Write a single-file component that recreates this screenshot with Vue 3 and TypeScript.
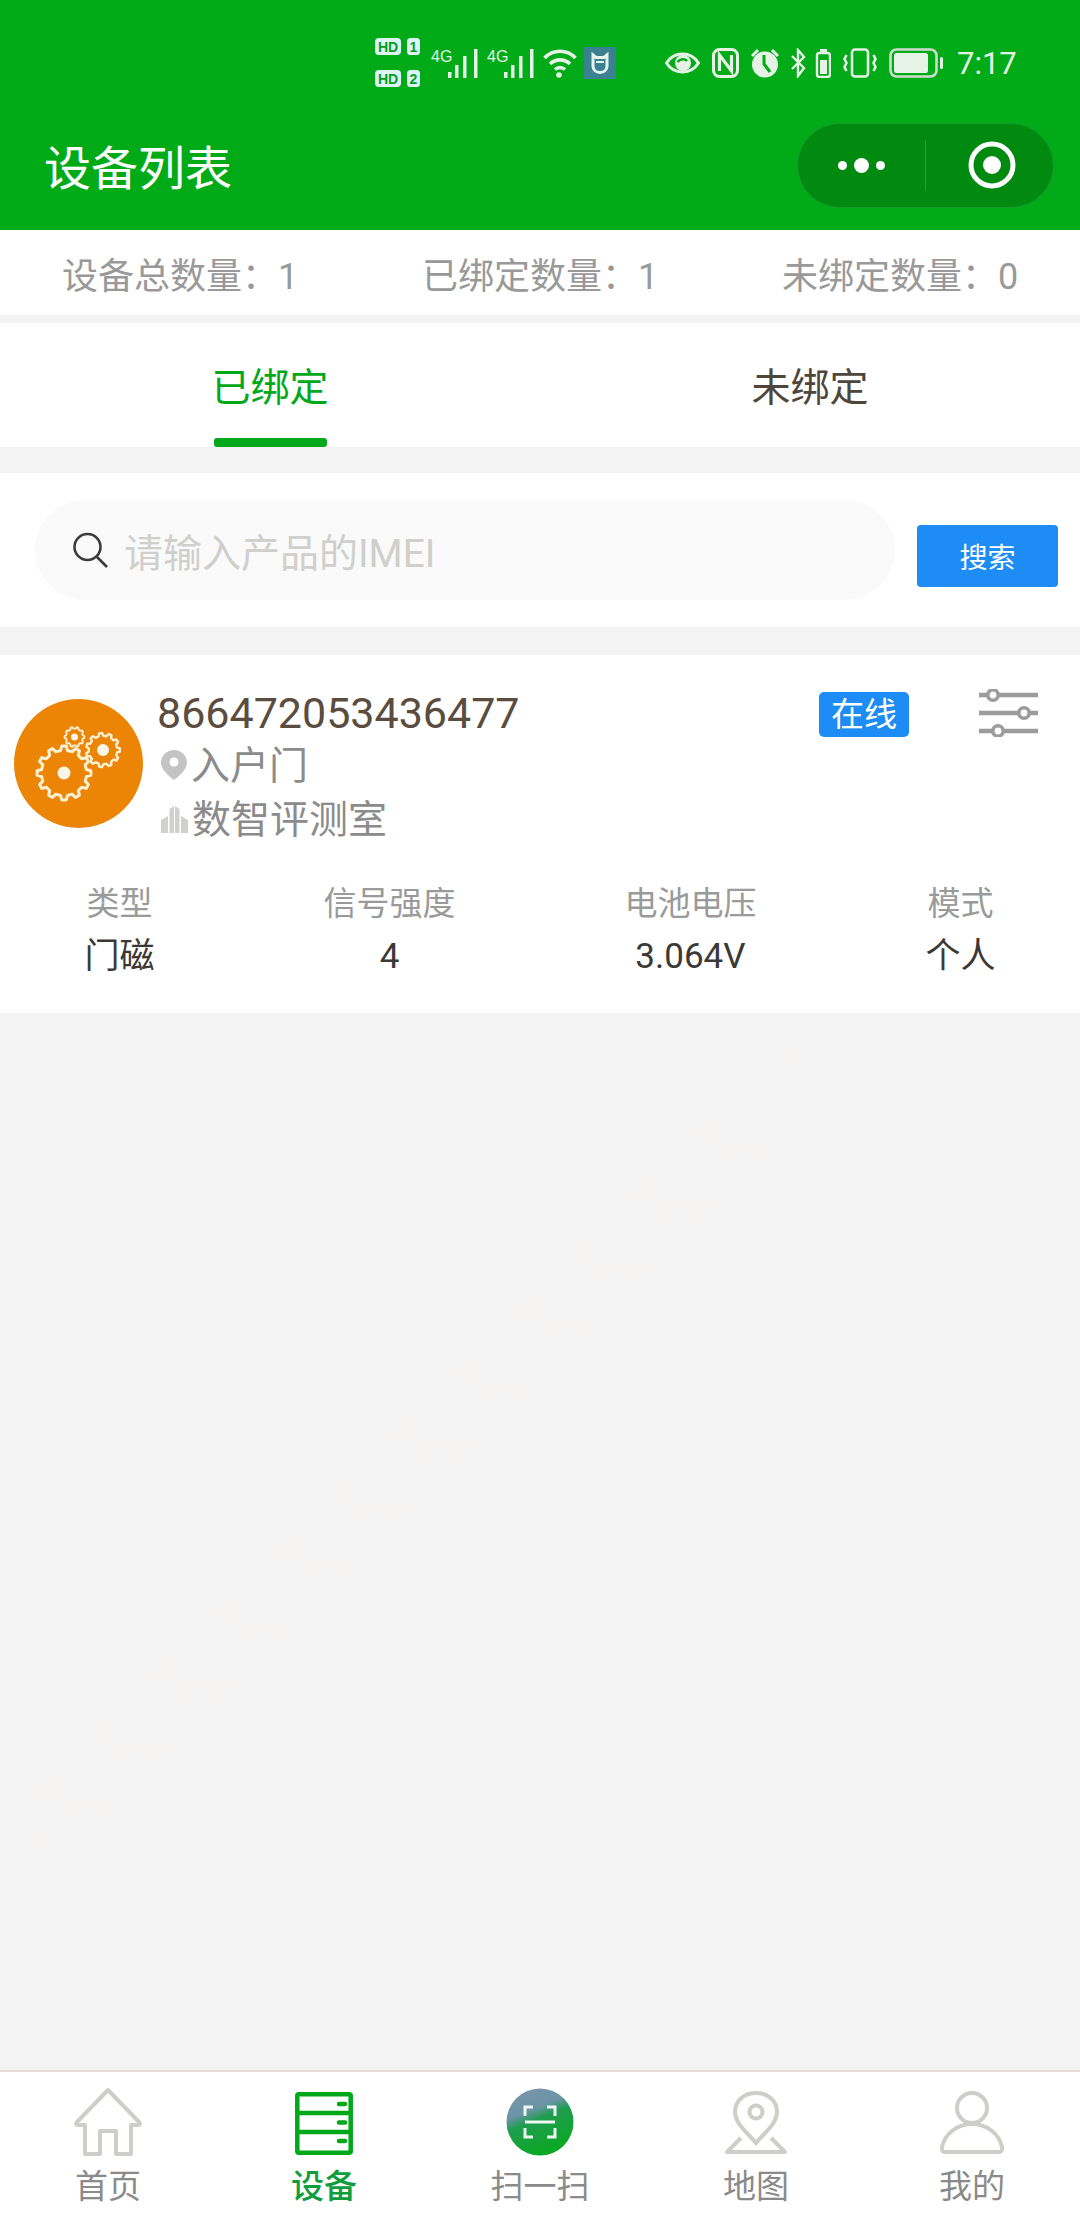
<script setup lang="ts">
const stats = [
  { label: '设备总数量：', value: 1 },
  { label: '已绑定数量：', value: 1 },
  { label: '未绑定数量：', value: 0 }
];

const fields = [
  { label: '类型', value: '门磁' },
  { label: '信号强度', value: '4' },
  { label: '电池电压', value: '3.064V' },
  { label: '模式', value: '个人' }
];

const gears = [
  { cx: 50, cy: 74, r: 27, teeth: 12, hub: 6.5, width: 3 },
  { cx: 89, cy: 51, r: 17, teeth: 11, hub: 6, width: 2.4 },
  { cx: 60.5, cy: 38, r: 10, teeth: 10, hub: 3.5, width: 1.8 }
];

// outline of a toothed wheel, tooth depth scales with the radius
const gearPath = (cx: number, cy: number, r: number, teeth: number): string => {
  const inner = r * 0.84;
  const pts: string[] = [];
  for (let i = 0; i < teeth; i++) {
    const step = (Math.PI * 2) / teeth;
    const a = i * step;
    const offsets: [number, number][] = [
      [-0.3, inner],
      [-0.16, r],
      [0.16, r],
      [0.3, inner]
    ];
    for (const [o, rad] of offsets) {
      const x = cx + Math.cos(a + o * step) * rad;
      const y = cy + Math.sin(a + o * step) * rad;
      pts.push(`${x.toFixed(1)} ${y.toFixed(1)}`);
    }
  }
  return `M${pts.join('L')}Z`;
};

// faint triangles running diagonally over the empty area, y is relative to .main (starts at 655)
const buildTriangles = (): string => {
  let d = 'M782 392H806L782 419ZM30 1174H58L30 1204Z';
  for (let k = 0; k < 12; k++) {
    const x = 718 - 60 * k;
    const y = 455 + 60 * k;
    d += `M${x} ${y}V${y + 30}H${x - 30}Z`;
    d += `M${x + 1} ${y + 31}H${x + 30}L${x + 1} ${y + 60}Z`;
    d += `M${x + 31} ${y + 31}H${x + 60}L${x + 31} ${y + 60}Z`;
  }
  return d;
};
const triangles = buildTriangles();
</script>

<template>
  <div class="page">
    <header class="header">
      <div class="status">
        <div class="status-left">
          <svg class="hd-box" width="45" height="50" viewBox="0 0 45 50">
            <rect x="0" y="0" width="26" height="17" rx="4" fill="#dff3fb" />
            <text x="13" y="14" text-anchor="middle" class="hd">HD</text>
            <rect x="32" y="0" width="13" height="17" rx="3.5" fill="#dff3fb" />
            <text x="38.5" y="14" text-anchor="middle" class="hd">1</text>
            <rect x="0" y="32" width="26" height="17" rx="4" fill="#dff3fb" />
            <text x="13" y="46" text-anchor="middle" class="hd">HD</text>
            <rect x="32" y="32" width="13" height="17" rx="3.5" fill="#dff3fb" />
            <text x="38.5" y="46" text-anchor="middle" class="hd">2</text>
          </svg>
          <svg v-for="n in 2" :key="n" width="47" height="30" viewBox="0 0 47 30">
            <text x="0" y="14" class="net">4G</text>
            <rect x="17" y="24" width="3.5" height="6" fill="#e6f2e6" />
            <rect x="24" y="17" width="3.5" height="13" fill="#e6f2e6" />
            <rect x="32" y="8" width="3.5" height="22" fill="#e6f2e6" />
            <rect x="43" y="1" width="3.5" height="29" fill="#e6f2e6" />
          </svg>
          <svg class="wifi" width="34" height="30" viewBox="0 0 34 30" fill="none" stroke="#e6f2e6" stroke-width="3.6">
            <path d="M1.5 10C10 1 24 1 32.5 10" />
            <path d="M7 16C12.5 10.5 21.5 10.500 27 16" />
            <path d="M12 21.500C14.800 18.800 19.200 18.800 22 21.500" />
            <circle cx="16" cy="27" r="2.800" fill="#e6f2e6" stroke="none" />
          </svg>
          <svg width="32" height="32" viewBox="0 0 32 32">
            <rect width="32" height="32" fill="#3b8190" />
            <path d="M9 8L12 10.500H20L23 8V19C23 23 20 25.500 16 25.500C12 25.500 9 23 9 19Z" fill="none" stroke="#e6f2f2" stroke-width="3" />
            <path d="M12 15H20" stroke="#e6f2f2" stroke-width="2" />
          </svg>
        </div>
        <div class="status-right">
          <svg width="35" height="26" viewBox="0 0 35 26" fill="none" stroke="#e6f2e6" stroke-width="3">
            <path d="M1.500 13C9 1 26 1 33.500 13C26 25 9 25 1.500 13Z" />
            <circle cx="18" cy="13" r="8" fill="#e6f2e6" stroke="none" />
            <path d="M12.500 12C15 8.500 20 8.500 22 11" stroke="#00ab17" stroke-width="2.400" />
          </svg>
          <svg width="27" height="30" viewBox="0 0 27 30" fill="none" stroke="#e6f2e6" stroke-width="3">
            <rect x="1.500" y="1.500" width="24" height="27" rx="6" />
            <path d="M7.500 23V7L19.500 23V7" stroke-width="3.200" />
          </svg>
          <svg width="28" height="30" viewBox="0 0 28 30">
            <circle cx="14" cy="16.500" r="13" fill="#e6f2e6" />
            <path d="M13 7V16L19 24" fill="none" stroke="#00ab17" stroke-width="3" />
            <path d="M1 8L7 2M27 8L21 2" stroke="#e6f2e6" stroke-width="3" />
          </svg>
          <svg width="40" height="30" viewBox="0 0 40 30" fill="none" stroke="#e6f2e6" stroke-width="2.400">
            <path d="M1 8L13 20L7 28V2L13 9L1 21" />
            <rect x="26" y="5" width="13" height="24" rx="2.500" />
            <rect x="29" y="1" width="7" height="3" fill="#e6f2e6" stroke="none" />
            <rect x="29" y="12" width="7" height="14" fill="#e6f2e6" stroke="none" />
          </svg>
          <svg width="34" height="30" viewBox="0 0 34 30" fill="none" stroke="#e6f2e6" stroke-width="2.600">
            <rect x="9" y="1.500" width="16" height="27" rx="3" />
            <path d="M3.500 7L1.500 11L3.500 15L1.500 19L3.500 23M30.500 7L32.500 11L30.500 15L32.500 19L30.500 23" />
          </svg>
          <svg width="54" height="30" viewBox="0 0 54 30">
            <rect x="1.500" y="1.500" width="46" height="27" rx="6" fill="none" stroke="#cfdccf" stroke-width="2.600" />
            <rect x="5" y="5" width="34" height="20" rx="2.500" fill="#e6f2e6" />
            <rect x="51" y="9" width="3" height="12" rx="1.500" fill="#e6f2e6" />
          </svg>
        </div>
        <span class="clock">7:17</span>
      </div>

      <div class="nav">
        <span class="title">设备列表</span>
        <div class="capsule">
          <div class="capsule-cell">
            <i class="dot"></i><i class="dot big"></i><i class="dot"></i>
          </div>
          <div class="capsule-line"></div>
          <div class="capsule-cell">
            <svg class="target" width="50" height="50" viewBox="0 0 50 50">
              <circle cx="25" cy="25" r="21" fill="none" stroke="#fff" stroke-width="5" />
              <circle cx="25" cy="25" r="9" fill="#fff" />
            </svg>
          </div>
        </div>
      </div>
    </header>

    <section class="stats">
      <span v-for="s in stats" :key="s.label" class="stat">{{ s.label }}{{ s.value }}</span>
    </section>

    <section class="tabs">
      <div class="tab active">
        <span>已绑定</span>
        <i class="tab-bar"></i>
      </div>
      <div class="tab"><span>未绑定</span></div>
    </section>

    <section class="search">
      <div class="search-box">
        <svg width="37" height="36" viewBox="0 0 37 36" fill="none" stroke="#3b3b3b" stroke-width="2.600">
          <circle cx="15.500" cy="15" r="13" />
          <path d="M25 25L35 35" />
        </svg>
        <span class="placeholder">请输入产品的IMEI</span>
      </div>
      <button class="search-btn">搜索</button>
    </section>

    <main class="main">
      <svg class="marks" width="1080" height="1416" viewBox="0 0 1080 1416">
        <path :d="triangles" fill="#f6f3f3" />
      </svg>
      <article class="card">
        <div class="card-top">
          <svg class="avatar" width="129" height="129" viewBox="0 0 129 129">
            <circle cx="64.500" cy="64.500" r="64.500" fill="#ec8506" />
            <g v-for="g in gears" :key="g.cx">
              <path :d="gearPath(g.cx, g.cy, g.r, g.teeth)" fill="none" stroke="#fdf0d2" stroke-linejoin="round" :stroke-width="g.width" />
              <circle :cx="g.cx" :cy="g.cy" :r="g.hub" fill="#fdf6e6" />
            </g>
          </svg>
          <div class="info">
            <div class="imei">866472053436477</div>
            <div class="info-line">
              <svg width="26" height="30" viewBox="0 0 26 30">
                <path d="M13 0C5.500 0 0 5.800 0 12.500C0 20 8 26 13 30C18 26 26 20 26 12.500C26 5.800 20.500 0 13 0Z" fill="#c4c4c4" />
                <circle cx="13" cy="12" r="4.500" fill="#fff" />
              </svg>
              <span>入户门</span>
            </div>
            <div class="info-line">
              <svg width="27" height="28" viewBox="0 0 27 28" fill="#d0d0ce">
                <path d="M0 28V15L7 11V28ZM8.500 28V4L13 1V28ZM14 28V1L18.500 4V28ZM20 28V11L27 15V28Z" />
              </svg>
              <span>数智评测室</span>
            </div>
          </div>
          <span class="badge">在线</span>
          <svg class="sliders" width="59" height="48" viewBox="0 0 59 48" fill="#fff" stroke="#9c9c9c" stroke-width="3.600">
            <path d="M0 6H59M0 24H59M0 42H59" stroke-width="4.400" />
            <circle cx="14" cy="6" r="5.200" />
            <circle cx="45" cy="24" r="5.200" />
            <circle cx="19" cy="42" r="5.200" />
          </svg>
        </div>
        <div class="fields">
          <div v-for="f in fields" :key="f.label" class="field">
            <span class="field-label">{{ f.label }}</span>
            <span class="field-value">{{ f.value }}</span>
          </div>
        </div>
      </article>
    </main>

    <footer class="tabbar">
      <div class="tabbar-item">
        <svg width="68" height="70" viewBox="0 0 68 70" fill="none" stroke="#cdcdc9" stroke-width="4" stroke-linejoin="round">
          <path d="M34 3L3 35Q1 38 4 38H11V67H26V44H42V67H57V38H64Q67 38 65 35Z" />
        </svg>
        <span>首页</span>
      </div>
      <div class="tabbar-item on">
        <svg width="68" height="70" viewBox="0 0 68 70" fill="none" stroke="#00a81a" stroke-width="4.500">
          <rect x="7.300" y="7.300" width="53.400" height="58.400" rx="1.500" />
          <path d="M7 26H61M7 45H61" />
          <path d="M49 17H55M49 35.500H55M49 54H55" stroke-width="4.500" stroke-linecap="round" />
        </svg>
        <span>设备</span>
      </div>
      <div class="tabbar-item">
        <svg width="68" height="70" viewBox="0 0 68 70" fill="none">
          <defs>
            <linearGradient id="scan" x1="0.300" y1="0" x2="0.700" y2="1">
              <stop offset="0" stop-color="#7b93a9" />
              <stop offset="0.300" stop-color="#6a94a6" />
              <stop offset="0.450" stop-color="#1f9d50" />
              <stop offset="1" stop-color="#08aa1c" />
            </linearGradient>
          </defs>
          <circle cx="34" cy="35" r="33.500" fill="url(#scan)" />
          <path d="M27 20H19V29M41 20H49V29M19 41V50H27M49 41V50H41" stroke="#eef6f6" stroke-width="3" />
          <path d="M19 35H49" stroke="#eef6f6" stroke-width="3" />
        </svg>
        <span>扫一扫</span>
      </div>
      <div class="tabbar-item">
        <svg width="68" height="70" viewBox="0 0 68 70" fill="none" stroke="#cdcdc9" stroke-width="4">
          <path d="M34 56C27 47 13 37 13 25C13 13 23 6 34 6C45 6 55 13 55 25C55 37 41 47 34 56Z" />
          <circle cx="34" cy="25" r="6.500" />
          <path d="M19 51L5 65H63L49 51" stroke-linejoin="round" />
        </svg>
        <span>地图</span>
      </div>
      <div class="tabbar-item">
        <svg width="68" height="70" viewBox="0 0 68 70" fill="none" stroke="#cdcdc9" stroke-width="4">
          <circle cx="34" cy="21" r="15" />
          <path d="M7 65H61Q65 65 64 60C61 46 48 37 34 37C20 37 7 46 4 60Q3 65 7 65Z" />
        </svg>
        <span>我的</span>
      </div>
    </footer>
  </div>
</template>

<style>
html,
body {
  margin: 0;
  padding: 0;
}
</style>

<style scoped>
.page {
  display: flex;
  flex-direction: column;
  height: 100vh;
  background: #f3f3f3;
  font-family: Roboto, "Noto Sans CJK SC", sans-serif;
  overflow: hidden;
}

.header {
  height: 230px;
  flex: none;
  background: #00ab17;
}

.status {
  height: 100px;
  padding: 26px 65px 0 0;
  box-sizing: border-box;
  display: flex;
  align-items: center;
  justify-content: flex-end;
}

.status-left,
.status-right {
  display: flex;
  align-items: center;
}

.status-left {
  gap: 9px;
  margin-right: 49px;
}

.status-right {
  gap: 12px;
  margin-right: 14px;
}

.hd-box {
  margin-right: 2px;
}

.wifi {
  margin-right: -2px;
}

.hd {
  font-size: 14px;
  font-weight: 700;
  fill: #00a020;
  font-family: "Liberation Sans", sans-serif;
}

.net {
  font-size: 16px;
  fill: #e6f2e6;
  font-family: "Liberation Sans", sans-serif;
}

.clock {
  width: 58px;
  color: #e6f2e6;
  font-size: 31px;
  line-height: 1;
}

.nav {
  height: 130px;
  display: flex;
  align-items: center;
  justify-content: space-between;
  padding: 0 26px 0 44px;
}

.title {
  color: #fff;
  font-size: 47px;
  line-height: 1;
  padding-top: 7px;
}

.capsule {
  width: 257px;
  height: 85px;
  box-sizing: border-box;
  display: flex;
  align-items: center;
  border-radius: 43px;
  background: #018a10;
  border: 1px solid #1a9a2a;
}

.capsule-cell {
  flex: 1;
  display: flex;
  align-items: center;
  justify-content: center;
  gap: 7px;
}

.target {
  margin-left: 5px;
}

.capsule-line {
  width: 1px;
  height: 51px;
  background: #23a133;
}

.dot {
  width: 9px;
  height: 9px;
  border-radius: 50%;
  background: #fff;
}

.dot.big {
  width: 15px;
  height: 15px;
}

.stats {
  height: 85px;
  flex: none;
  display: flex;
  align-items: center;
  justify-content: space-around;
  background: #fff;
  color: #999;
  font-size: 36px;
  margin-bottom: 8px;
}

.tabs {
  height: 124px;
  flex: none;
  display: flex;
  background: #fff;
  font-size: 39px;
  color: #4e453b;
  margin-bottom: 26px;
}

.tab {
  position: relative;
  flex: 1;
  display: flex;
  align-items: center;
  justify-content: center;
  padding-bottom: 3px;
  box-sizing: border-box;
}

.tab.active {
  color: #00a81a;
}

.tab-bar {
  position: absolute;
  left: 214px;
  bottom: 0;
  width: 113px;
  height: 9px;
  border-radius: 3px;
  background: #00a81a;
}

.search {
  height: 154px;
  flex: none;
  box-sizing: border-box;
  display: flex;
  align-items: center;
  padding: 0 22px 0 35px;
  background: #fff;
  margin-bottom: 28px;
}

.search-box {
  flex: 1;
  height: 100px;
  display: flex;
  align-items: center;
  gap: 15px;
  padding-left: 37px;
  border-radius: 50px;
  background: #fafafa;
}

.placeholder {
  color: #cfcfcc;
  font-size: 39px;
}

.search-btn {
  width: 141px;
  height: 62px;
  margin: 12px 0 0 22px;
  padding: 0;
  border: 0;
  border-radius: 4px;
  background: #1e8cf5;
  color: #fff;
  font-family: inherit;
  font-size: 28px;
}

.main {
  position: relative;
  flex: 1;
  min-height: 0;
}

.marks {
  position: absolute;
  left: 0;
  top: 0;
}

.card {
  position: relative;
  height: 358px;
  box-sizing: border-box;
  background: #fff;
  padding-top: 37px;
}

.card-top {
  position: relative;
  display: flex;
  padding-left: 14px;
}

.avatar {
  flex: none;
  margin-top: 7px;
}

.info {
  margin-left: 14px;
  color: #8b8b8b;
  font-size: 39px;
}

.imei {
  height: 42px;
  color: #5a4c3e;
  font-size: 43px;
  line-height: 42px;
}

.info-line {
  height: 54px;
  display: flex;
  align-items: center;
  gap: 4px;
  margin-left: 4px;
}

.info-line svg {
  flex: none;
  margin-top: 6px;
}

.info-line:nth-child(2) {
  margin-top: 1px;
}

.badge {
  position: absolute;
  left: 819px;
  top: 0;
  width: 90px;
  height: 45px;
  border-radius: 5px;
  background: #1e8cf5;
  color: #fff;
  font-size: 33px;
  line-height: 45px;
  text-align: center;
}

.sliders {
  position: absolute;
  left: 979px;
  top: -3px;
}

.fields {
  display: flex;
  justify-content: space-around;
  margin-top: 39px;
}

.field {
  display: flex;
  flex-direction: column;
  align-items: center;
  width: fit-content;
}

.field-label {
  color: #9a9a9a;
  font-size: 33px;
  line-height: 44px;
}

.field-value {
  color: #3c3835;
  font-size: 35px;
  line-height: 44px;
  margin-top: 9px;
}

.tabbar {
  height: 157px;
  flex: none;
  box-sizing: border-box;
  display: flex;
  padding-top: 15px;
  border-top: 2px solid #e3dfd5;
  background: #fff;
}

.tabbar-item {
  flex: 1;
  display: flex;
  flex-direction: column;
  align-items: center;
  gap: 12px;
  color: #8a8a8a;
  font-size: 33px;
  line-height: 36px;
}

.tabbar-item.on {
  color: #0f9d3e;
  font-weight: 500;
}
</style>
